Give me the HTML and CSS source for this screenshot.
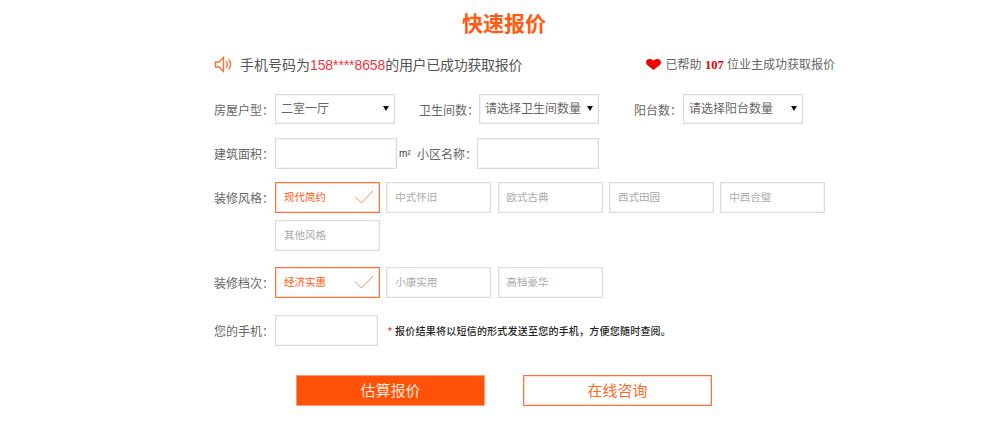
FILE: index.html
```html
<!DOCTYPE html>
<html lang="zh-CN">
<head>
<meta charset="utf-8">
<title>快速报价</title>
<link rel="stylesheet" href="styles.css">
</head>
<body>
<main class="page">
  <h1 class="title">快速报价</h1>
  <div class="notice">
    <div class="notice-left">
      <svg class="speaker" viewBox="0 0 18 17" width="18" height="17" fill="none" stroke="#ff6f30" stroke-width="1.400">
        <path d="M1.500 6h3.500L9.500 1.500v14L5 11H1.500z"/>
        <path d="M12 5.500a4 4 0 0 1 0 6"/>
        <path d="M14.500 3.500a7 7 0 0 1 0 10"/>
      </svg>
      <span>手机号码为<em class="phone">158****8658</em><span class="tail">的用户已成功获取报价</span></span>
    </div>
    <div class="notice-right">
      <svg class="heart" viewBox="0 0 15 11" width="15" height="11"><path fill="#f40000" d="M7.500 11 1.200 6C-.4 4.400-.3 2 1.200.8 3-.5 6 0 7.500 1.600 9 0 12-.5 13.800.8c1.500 1.200 1.600 3.600 0 5.200z"/></svg>
      <span>已帮助 <b class="count">107</b> 位业主成功获取报价</span>
    </div>
  </div>

  <div class="row row-house">
    <label class="label">房屋户型&#xFF1A;</label>
    <div class="select-box"><select><option>二室一厅</option></select></div>
    <label class="label l2">卫生间数&#xFF1A;</label>
    <div class="select-box"><select><option>请选择卫生间数量</option></select></div>
    <label class="label l3">阳台数&#xFF1A;</label>
    <div class="select-box"><select><option>请选择阳台数量</option></select></div>
  </div>

  <div class="row row-area">
    <label class="label">建筑面积&#xFF1A;</label>
    <input class="field area" type="text">
    <span class="unit">m²</span>
    <label class="label l4">小区名称&#xFF1A;</label>
    <input class="field area" type="text">
  </div>

  <div class="row row-style">
    <label class="label top">装修风格&#xFF1A;</label>
    <div class="options">
      <div class="option selected">现代简约
        <svg class="check" viewBox="0 0 20 14" width="20" height="14" fill="none" stroke="#ff8a5c" stroke-width="1"><path d="M1 6.500 7.500 13 19 1"/></svg>
      </div>
      <div class="option">中式怀旧</div>
      <div class="option">欧式古典</div>
      <div class="option">西式田园</div>
      <div class="option">中西合璧</div>
      <div class="option">其他风格</div>
    </div>
  </div>

  <div class="row row-grade">
    <label class="label top">装修档次&#xFF1A;</label>
    <div class="options">
      <div class="option selected">经济实惠
        <svg class="check" viewBox="0 0 20 14" width="20" height="14" fill="none" stroke="#ff8a5c" stroke-width="1"><path d="M1 6.500 7.500 13 19 1"/></svg>
      </div>
      <div class="option">小康实用</div>
      <div class="option">高档豪华</div>
    </div>
  </div>

  <div class="row row-phone">
    <label class="label">您的手机&#xFF1A;</label>
    <input class="field phone-input" type="text">
    <p class="hint"><span class="star">*</span> 报价结果将以短信的形式发送至您的手机&#xFF0C;方便您随时查阅。</p>
  </div>

  <div class="actions">
    <button class="btn primary" type="button">估算报价</button>
    <button class="btn ghost" type="button">在线咨询</button>
  </div>
</main>
</body>
</html>
```
FILE: styles.css
```css
* { box-sizing: border-box; }
html, body { margin: 0; padding: 0; background: #fff; }
body {
  font-family: "Liberation Sans", "Noto Sans CJK SC", sans-serif;
  font-size: 12px;
  color: #666;
}
.page { width: 640px; margin-left: 214px; }
.title {
  width: 580px;
  margin: 0;
  height: 48px;
  line-height: 47px;
  text-align: center;
  font-size: 21px;
  font-weight: 700;
  color: #ff5a0f;
}
.notice {
  width: 621px;
  height: 32px;
  display: flex;
  justify-content: space-between;
  align-items: center;
}
.notice-left { display: flex; align-items: center; gap: 8px; font-size: 14px; color: #555; }
.phone { font-style: normal; color: #f5333f; letter-spacing: -.1px; }
.tail { letter-spacing: -.3px; }
.notice-right { display: flex; align-items: center; gap: 5px; font-size: 12px; color: #666; }
.count { font-family: "Liberation Serif", serif; color: #e60000; font-size: 12.500px; }
.row { display: flex; align-items: center; }
.label { color: #666; font-size: 12px; flex: none; width: 61px; font-family: "Noto Sans CJK SC", sans-serif; }
.top { align-self: flex-start; line-height: 31px; }
.row-house { margin-top: 14px; height: 30px; }
.select-box {
  position: relative;
  flex: none;
  width: 120px;
  height: 30px;
}
.select-box select {
  appearance: none;
  width: 100%;
  height: 100%;
  padding: 0 5px;
  border: 1px solid #dcdcdc;
  box-shadow: inset 0 0 0 1px #f4f4f4;
  border-radius: 0;
  background: #fff;
  font: inherit;
  color: #666;
}
.select-box::after {
  content: "";
  position: absolute;
  right: 6px;
  top: 12px;
  border-style: solid;
  border-width: 5px 3px 0;
  border-color: #111 transparent transparent;
}
.l2 { width: 60px; margin-left: 24px; }
.l3 { width: 49px; margin-left: 35px; }
.l4 { width: 60px; margin-left: 5px; }
.row-area { margin-top: 14px; height: 31px; }
.field {
  flex: none;
  height: 31px;
  border: 1px solid #dcdcdc;
  box-shadow: inset 0 0 0 1px #f4f4f4;
  border-radius: 0;
  background: #fff;
  padding: 0 5px;
  font: inherit;
}
.area { width: 122px; }
.unit { width: 13px; margin-left: 2px; font-size: 10px; color: #444; }
.row-style { margin-top: 13px; align-items: flex-start; }
.options {
  width: 552px;
  display: flex;
  flex-wrap: wrap;
  gap: 7px 6.300px;
}
.option {
  position: relative;
  width: 105px;
  height: 31px;
  line-height: 29px;
  padding-left: 8px;
  border: 1px solid #dcdcdc;
  box-shadow: inset 0 0 0 1px #f4f4f4;
  font-size: 10.500px;
  color: #aaa;
}
.option.selected { border-color: #ff7038; box-shadow: inset 0 0 0 1px #ffd9c9; color: #ff5a0f; }
.check { position: absolute; right: 5px; top: 7px; }
.row-grade { margin-top: 16px; align-items: flex-start; }
.row-phone { margin-top: 17px; height: 31px; }
.phone-input { width: 103px; }
.hint { margin: 0 0 0 10px; font-size: 10px; letter-spacing: .22px; font-weight: 500; color: #222; }
.star { color: #f00; }
.actions { display: flex; gap: 38px; margin: 29px 0 0 82px; }
.btn {
  width: 189px;
  height: 31px;
  padding: 0 0 2px;
  border-radius: 0;
  font: inherit;
  font-size: 15px;
}
.primary { background: #ff5208; border: 1px solid #ff9a73; color: #ffe9df; }
.ghost { background: #fff; border: 1px solid #ff7038; box-shadow: inset 0 0 0 1px #ffd9c9; color: #ff6a2a; }
```
